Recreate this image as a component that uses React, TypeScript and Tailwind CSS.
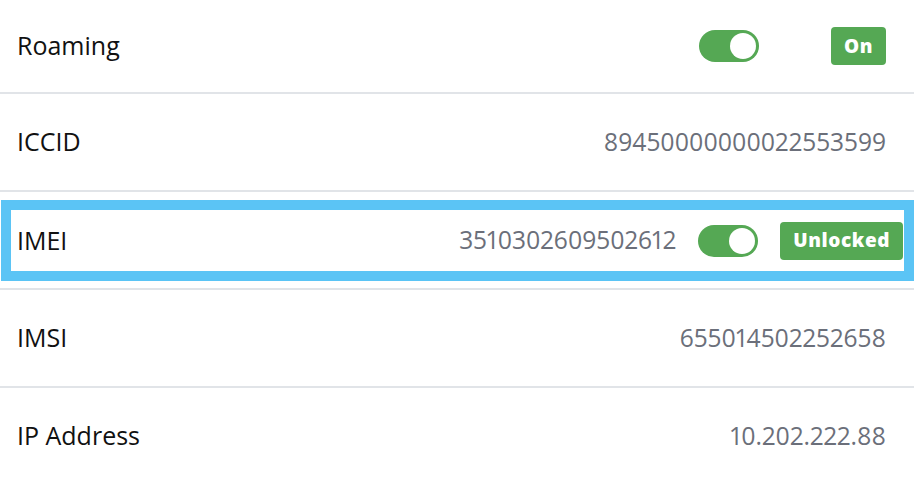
import React from "react";

function Toggle() {
  return (
    <div className="flex h-[32px] w-[60px] items-center justify-end rounded-full bg-[#55a854] px-[3px]">
      <div className="h-[26px] w-[26px] rounded-full bg-white" />
    </div>
  );
}

function Badge({ children }: { children: React.ReactNode }) {
  return (
    <span className="flex h-[38px] items-center rounded-[4px] bg-[#55a854] px-[13px] font-['Open_Sans',sans-serif] text-[19px] font-extrabold tracking-[0.03em] text-white">
      {children}
    </span>
  );
}

const rows = [
  { label: "ICCID", value: "89450000000022553599" },
];

export default function App() {
  return (
    <div className="w-[914px] h-[480px] overflow-hidden bg-white font-['Open_Sans',sans-serif] text-[25px]">
      <div className="flex h-[92px] items-center pl-[17px] pr-[28px]">
        <span className="flex-1 text-[#111]">Roaming</span>
        <Toggle />
        <span className="ml-[72px]">
          <Badge>On</Badge>
        </span>
      </div>

      {rows.map((row) => (
        <div key={row.label} className="flex h-[98px] items-center border-t-2 border-[#e1e4e8] pl-[17px] pr-[28px]">
          <span className="flex-1 text-[#111]">{row.label}</span>
          <span className="text-[24.6px] text-[#6b6f7a] proportional-nums">{row.value}</span>
        </div>
      ))}

      <div className="h-[98px] border-t-2 border-[#e1e4e8] pl-[1px] pt-[8px]">
        <div className="flex h-[81px] items-center border-[10px] border-[#5bc4f5] pl-[6px] pr-[1px]">
          <span className="flex-1 text-[#111]">IMEI</span>
          <span className="text-[24.6px] text-[#6b6f7a] proportional-nums">3510302609502612</span>
          <span className="ml-[22px]">
            <Toggle />
          </span>
          <span className="ml-[22px]">
            <Badge>Unlocked</Badge>
          </span>
        </div>
      </div>

      <div className="flex h-[98px] items-center border-t-2 border-[#e1e4e8] pl-[17px] pr-[28px]">
        <span className="flex-1 text-[#111]">IMSI</span>
        <span className="text-[24.6px] text-[#6b6f7a] proportional-nums">655014502252658</span>
      </div>

      <div className="flex h-[98px] items-center border-t-2 border-[#e1e4e8] pl-[17px] pr-[28px]">
        <span className="flex-1 text-[#111]">IP Address</span>
        <span className="text-[24.6px] text-[#6b6f7a] proportional-nums">10.202.222.88</span>
      </div>
    </div>
  );
}
